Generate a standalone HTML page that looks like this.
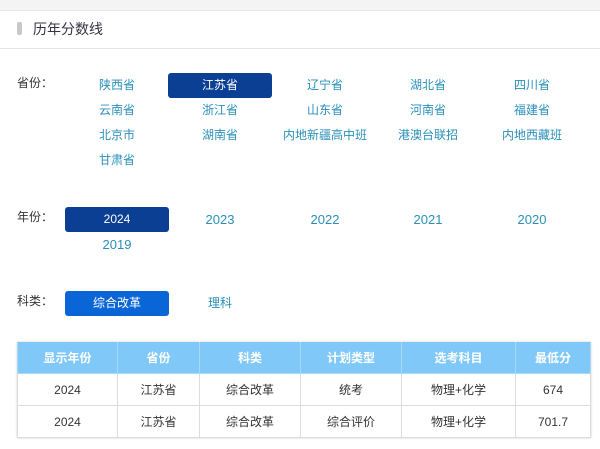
<!DOCTYPE html><html><head><meta charset="utf-8"><style>
body{margin:0;width:600px;height:449px;background:#fff;font-family:"Liberation Sans","Noto Sans CJK SC",sans-serif;position:relative;overflow:hidden}
.a{position:absolute}
.t{position:absolute;font-size:12px;color:#2a8fb8;width:104px;text-align:center;line-height:25px}
.y{font-size:13px}
.lab{position:absolute;font-size:12px;color:#333;left:17px}
.btn{position:absolute;width:104px;height:25px;border-radius:3px;color:#fff;font-size:12px;text-align:center;line-height:25px}
table{position:absolute;left:17px;top:342px;width:574px;border-collapse:collapse;font-size:12px;color:#333;box-shadow:0 0 2px #ccc}
td,th{border:1px solid #ddd;text-align:center;height:31px;padding:0}
th{background:#80c8f8;color:#fff;font-weight:bold;border-color:#a9d8f8;border-top:none}
</style></head><body>
<div class="a" style="left:0;top:0;width:600px;height:10px;background:#f4f4f4"></div>
<div class="a" style="left:0;top:10px;width:600px;height:37px;background:#fff;border-top:1px solid #e8e8e8;border-bottom:1px solid #e3e3e3"></div>
<div class="a" style="left:17px;top:22px;width:5px;height:13px;background:#c8c8c8;border-radius:2px"></div>
<div class="a" style="left:33px;top:19px;font-size:14px;color:#334;">历年分数线</div>
<div class="lab" style="top:74px">省份：</div>
<div class="btn" style="left:168px;top:73px;background:#0a3f93">江苏省</div>
<div class="t" style="left:65px;top:73px">陕西省</div>
<div class="t" style="left:273px;top:73px">辽宁省</div>
<div class="t" style="left:376px;top:73px">湖北省</div>
<div class="t" style="left:480px;top:73px">四川省</div>
<div class="t" style="left:65px;top:98px">云南省</div>
<div class="t" style="left:168px;top:98px">浙江省</div>
<div class="t" style="left:273px;top:98px">山东省</div>
<div class="t" style="left:376px;top:98px">河南省</div>
<div class="t" style="left:480px;top:98px">福建省</div>
<div class="t" style="left:65px;top:123px">北京市</div>
<div class="t" style="left:168px;top:123px">湖南省</div>
<div class="t" style="left:263px;top:123px;width:124px">内地新疆高中班</div>
<div class="t" style="left:376px;top:123px">港澳台联招</div>
<div class="t" style="left:470px;top:123px;width:124px">内地西藏班</div>
<div class="t" style="left:65px;top:148px">甘肃省</div>
<div class="lab" style="top:208px">年份：</div>
<div class="btn y" style="left:65px;top:207px;background:#0a3f93">2024</div>
<div class="t y" style="left:168px;top:207px">2023</div>
<div class="t y" style="left:273px;top:207px">2022</div>
<div class="t y" style="left:376px;top:207px">2021</div>
<div class="t y" style="left:480px;top:207px">2020</div>
<div class="t y" style="left:65px;top:232px">2019</div>
<div class="lab" style="top:292px">科类：</div>
<div class="btn" style="left:65px;top:291px;background:#0a66d6">综合改革</div>
<div class="t" style="left:168px;top:291px">理科</div>
<table>
<tr><th style="width:99px">显示年份</th><th style="width:81px">省份</th><th style="width:100px">科类</th><th style="width:100px">计划类型</th><th style="width:113px">选考科目</th><th>最低分</th></tr>
<tr><td>2024</td><td>江苏省</td><td>综合改革</td><td>统考</td><td>物理+化学</td><td>674</td></tr>
<tr><td>2024</td><td>江苏省</td><td>综合改革</td><td>综合评价</td><td>物理+化学</td><td>701.7</td></tr>
</table>
</body></html>
